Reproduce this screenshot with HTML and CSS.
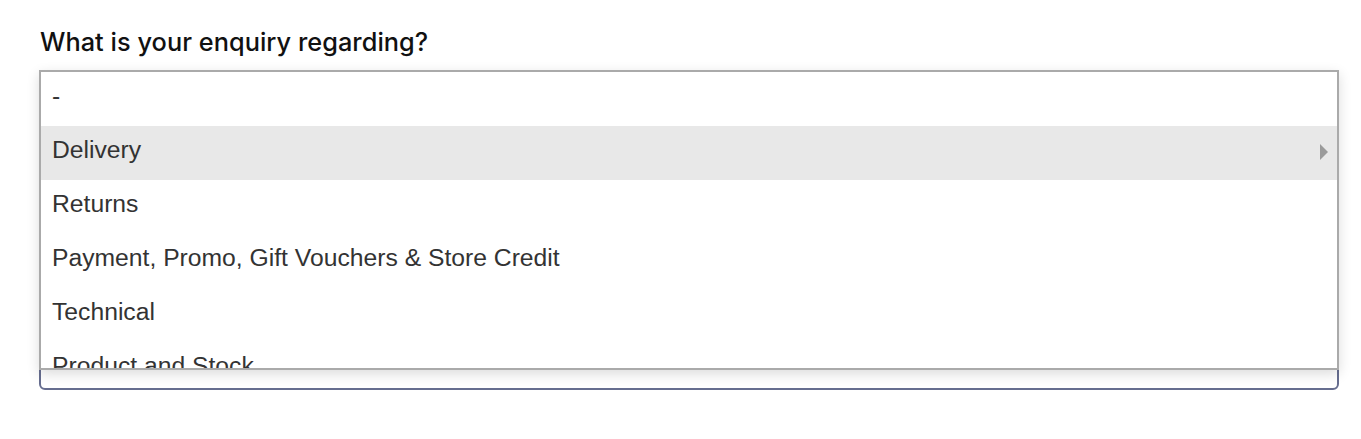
FILE: index.html
```html
<!DOCTYPE html>
<html lang="en">
<head>
<meta charset="utf-8">
<title>Enquiry</title>
<link rel="stylesheet" href="styles.css">
</head>
<body>
<div class="page">
  <label class="label">What is your enquiry regarding?</label>
  <div class="field">
    <div class="menu">
      <div class="opt">-</div>
      <div class="opt active"><span>Delivery</span><span class="arrow"></span></div>
      <div class="opt">Returns</div>
      <div class="opt">Payment, Promo, Gift Vouchers &amp; Store Credit</div>
      <div class="opt">Technical</div>
      <div class="opt">Product and Stock</div>
    </div>
  </div>
</div>
</body>
</html>
```
FILE: styles.css
```css
html, body {
  margin: 0;
  padding: 0;
  background: #ffffff;
}
.page {
  padding: 28px 22px 0 39px;
  display: flex;
  flex-direction: column;
}
.label {
  font-family: "Inter", "Lato", sans-serif;
  font-size: 25.3px;
  line-height: 28px;
  font-weight: 500;
  letter-spacing: 0.05px;
  color: #111111;
  padding-left: 1px;
  margin-bottom: 14px;
}
.field {
  position: relative;
  width: 1300px;
  height: 320px;
  box-sizing: border-box;
  border: 2px solid #666d8f;
  border-radius: 6px;
}
.menu {
  position: absolute;
  top: -2px;
  left: -2px;
  right: -2px;
  height: 300px;
  box-sizing: border-box;
  border: 2px solid #aaaaaa;
  background: #ffffff;
  overflow: hidden;
  box-shadow: 0 4px 12px rgba(0, 0, 0, 0.14);
  display: flex;
  flex-direction: column;
}
.opt {
  flex: 0 0 auto;
  height: 54px;
  box-sizing: border-box;
  padding: 0 9px 7px 11px;
  line-height: 47px;
  font-family: "Liberation Sans", Arial, sans-serif;
  font-size: 24.7px;
  color: #333333;
  display: flex;
  align-items: center;
  justify-content: space-between;
}
.opt.active {
  background: #e8e8e8;
}
.arrow {
  width: 0;
  height: 0;
  border-left: 8px solid #9a9a9a;
  border-top: 8px solid transparent;
  border-bottom: 8px solid transparent;
  margin-top: 5px;
}
```
